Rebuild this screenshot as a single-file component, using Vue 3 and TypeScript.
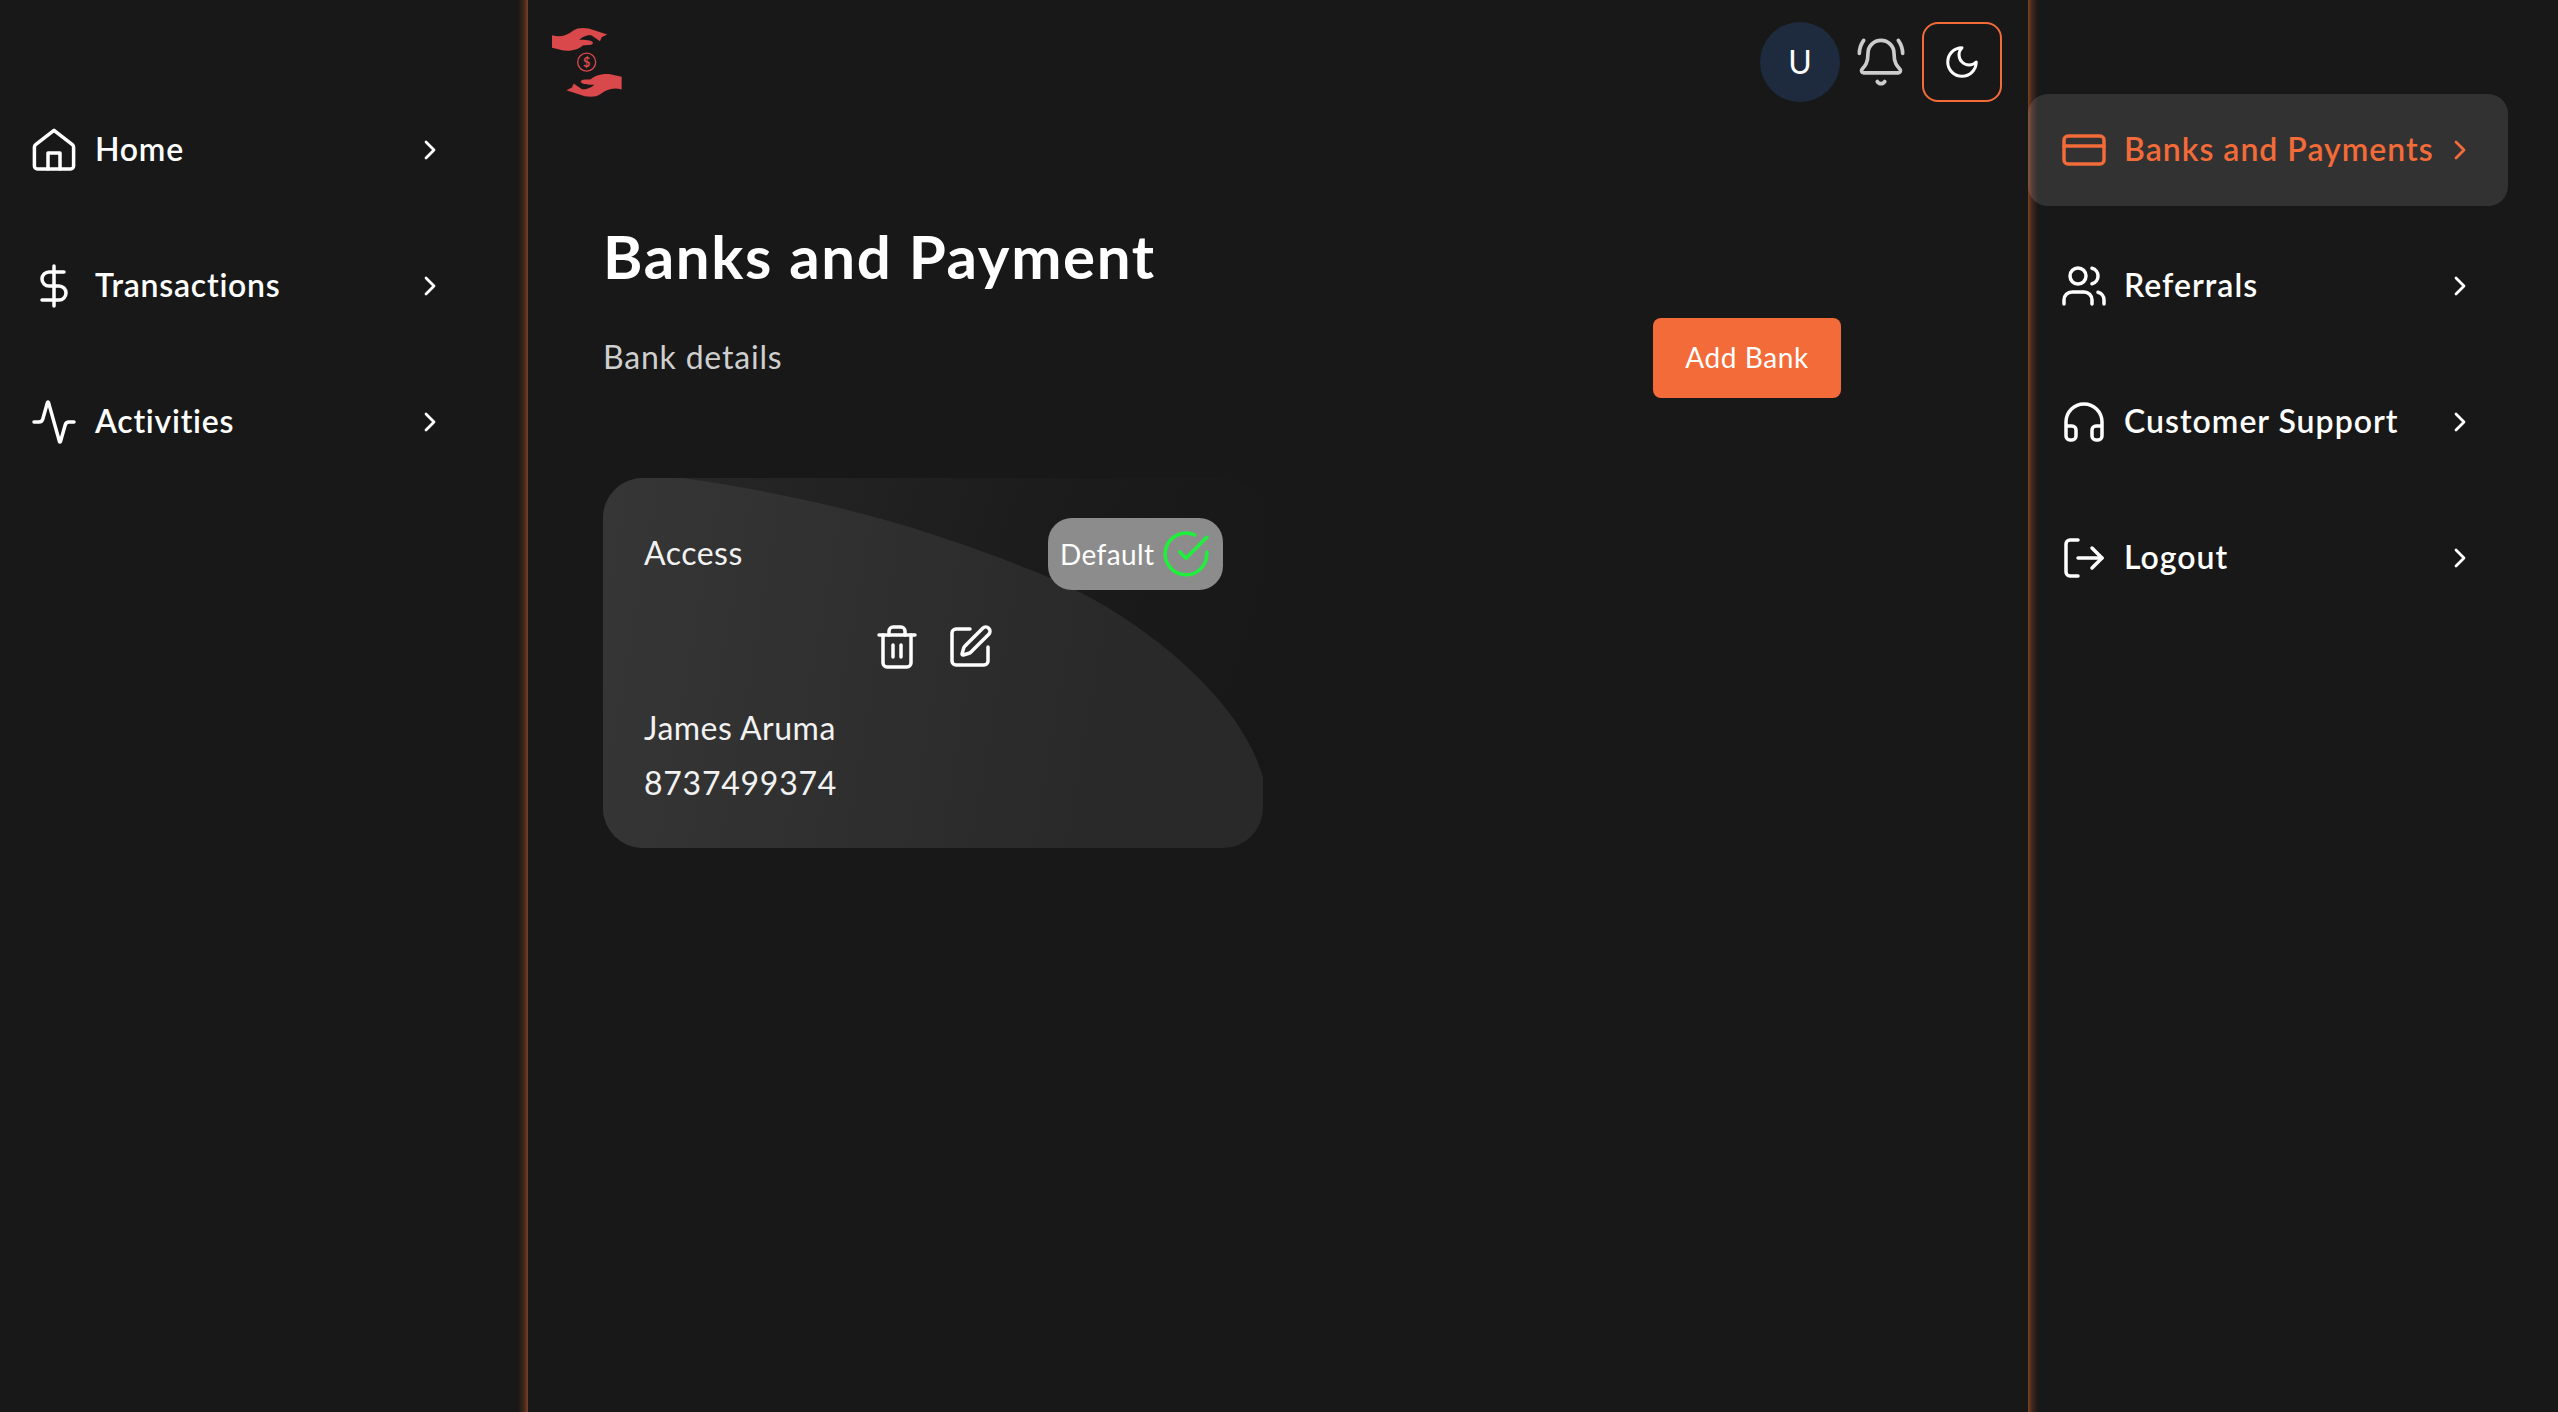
<script setup lang="ts">
type NavItem = {
  label: string;
  paths: string[];
  active?: boolean;
};

const leftNav: NavItem[] = [
  {
    label: "Home",
    paths: [
      "M12 2.2 21.2 9.3a1.5 1.5 0 0 1 .6 1.2V20a1.5 1.5 0 0 1-1.5 1.5H3.7A1.5 1.5 0 0 1 2.2 20v-9.5a1.5 1.5 0 0 1 .6-1.2Z",
      "M9 21.5V13.5h6v8",
    ],
  },
  {
    label: "Transactions",
    paths: ["M12 2v20", "M17 5H9.5a3.5 3.5 0 0 0 0 7h5a3.5 3.5 0 0 1 0 7H6"],
  },
  {
    label: "Activities",
    paths: [
      "M22 12h-2.48a2 2 0 0 0-1.93 1.46l-2.35 8.36a.25.25 0 0 1-.48 0L9.24 2.18a.25.25 0 0 0-.48 0l-2.35 8.36A2 2 0 0 1 4.49 12H2",
    ],
  },
];

const rightNav: NavItem[] = [
  {
    label: "Banks and Payments",
    active: true,
    paths: ["M4 5h16a2 2 0 0 1 2 2v10a2 2 0 0 1-2 2H4a2 2 0 0 1-2-2V7a2 2 0 0 1 2-2Z", "M2 10h20"],
  },
  {
    label: "Referrals",
    paths: [
      "M16 21v-2a4 4 0 0 0-4-4H6a4 4 0 0 0-4 4v2",
      "M13 7a4 4 0 1 1-8 0 4 4 0 0 1 8 0Z",
      "M22 21v-2a4 4 0 0 0-3-3.87",
      "M16 3.13a4 4 0 0 1 0 7.75",
    ],
  },
  {
    label: "Customer Support",
    paths: [
      "M3 14h3a2 2 0 0 1 2 2v3a2 2 0 0 1-2 2H5a2 2 0 0 1-2-2v-7a9 9 0 0 1 18 0v7a2 2 0 0 1-2 2h-1a2 2 0 0 1-2-2v-3a2 2 0 0 1 2-2h3",
    ],
  },
  {
    label: "Logout",
    paths: ["M9 21H5a2 2 0 0 1-2-2V5a2 2 0 0 1 2-2h4", "m16 17 5-5-5-5", "M21 12H9"],
  },
];

const handPath =
  "M96 104C120 112 140 105 160 90C175 80 200 80 225 90L262 102L245 110L240 122L215 105C200 102 185 112 178 118C195 118 215 118 219 127C218 135 205 134 190 134C175 148 150 152 130 150L96 142Z";
</script>

<template>
  <div class="page">
    <aside class="sidebar sidebar-left">
      <nav class="nav">
        <a v-for="item in leftNav" :key="item.label" class="nav-item">
          <svg class="nav-icon" viewBox="0 0 24 24">
            <path v-for="d in item.paths" :key="d" :d="d" />
          </svg>
          <span class="nav-label">{{ item.label }}</span>
          <svg class="chevron" viewBox="0 0 24 24"><path d="m9 18 6-6-6-6" /></svg>
        </a>
      </nav>
    </aside>

    <main class="main">
      <header class="topbar">
        <svg class="logo" viewBox="96 80 210 212">
          <path :d="handPath" />
          <path :d="handPath" transform="rotate(180 200.5 185.5)" />
          <circle class="coin" cx="200" cy="185" r="27" />
          <text class="coin-sign" x="200" y="198" text-anchor="middle">$</text>
        </svg>
        <div class="topbar-actions">
          <div class="avatar">U</div>
          <svg class="bell" viewBox="0 0 24 24">
            <path d="M10.268 21a2 2 0 0 0 3.464 0" />
            <path d="M22 8c0-2.3-.8-4.3-2-6" />
            <path d="M3.262 15.326A1 1 0 0 0 4 17h16a1 1 0 0 0 .74-1.673C19.41 13.956 18 12.499 18 8A6 6 0 0 0 6 8c0 4.499-1.411 5.956-2.738 7.326" />
            <path d="M4 2C2.8 3.7 2 5.7 2 8" />
          </svg>
          <button class="theme-button">
            <svg class="moon" viewBox="0 0 24 24"><path d="M12 3a6 6 0 0 0 9 9 9 9 0 1 1-9-9Z" /></svg>
          </button>
        </div>
      </header>

      <section class="content">
        <h1 class="title">Banks and Payment</h1>
        <div class="subhead">
          <p class="subtitle">Bank details</p>
          <button class="add-button">Add Bank</button>
        </div>

        <div class="bank-card">
          <div class="card-top">
            <span class="bank-name">Access</span>
            <span class="default-pill">
              Default
              <svg class="check" viewBox="0 0 24 24">
                <path d="M22 11.08V12a10 10 0 1 1-5.93-9.14" />
                <path d="M22 4 12 14.01l-3-3" />
              </svg>
            </span>
          </div>
          <div class="card-actions">
            <svg class="action-icon" viewBox="0 0 24 24">
              <path d="M3 6h18" />
              <path d="M19 6v14c0 1-1 2-2 2H7c-1 0-2-1-2-2V6" />
              <path d="M8 6V4c0-1 1-2 2-2h4c1 0 2 1 2 2v2" />
              <path d="M10 11v6" />
              <path d="M14 11v6" />
            </svg>
            <svg class="action-icon" viewBox="0 0 24 24">
              <path d="M12 3H5a2 2 0 0 0-2 2v14a2 2 0 0 0 2 2h14a2 2 0 0 0 2-2v-7" />
              <path d="M18.375 2.625a1 1 0 0 1 3 3l-9.013 9.014a2 2 0 0 1-.853.505l-2.873.84a.5.5 0 0 1-.62-.62l.84-2.873a2 2 0 0 1 .506-.852z" />
            </svg>
          </div>
          <p class="card-line">James Aruma</p>
          <p class="card-line digits">8737499374</p>
        </div>
      </section>
    </main>

    <aside class="sidebar sidebar-right">
      <nav class="nav">
        <a
          v-for="item in rightNav"
          :key="item.label"
          class="nav-item"
          :class="{ active: item.active }"
        >
          <svg class="nav-icon" viewBox="0 0 24 24">
            <path v-for="d in item.paths" :key="d" :d="d" />
          </svg>
          <span class="nav-label">{{ item.label }}</span>
          <svg class="chevron" viewBox="0 0 24 24"><path d="m9 18 6-6-6-6" /></svg>
        </a>
      </nav>
    </aside>
  </div>
</template>

<style>
html,
body {
  margin: 0;
  background: #181818;
}
</style>

<style scoped>
.page {
  display: grid;
  grid-template-columns: 528px 1500px 530px;
  height: 1412px;
  overflow: hidden;
  background: #181818;
  color: #fff;
  font-family: Lato, "Noto Sans", sans-serif;
}

.sidebar-left {
  background: linear-gradient(90deg, transparent, rgba(125, 63, 36, 0.4) 60%, #7d3f24) right top / 10px 100% no-repeat;
}

.sidebar-right {
  background: linear-gradient(90deg, #7d3f24, rgba(125, 63, 36, 0.4) 40%, transparent) left top / 10px 100% no-repeat;
}

.nav {
  display: flex;
  flex-direction: column;
  gap: 24px;
  padding-top: 94px;
}

.nav-item {
  display: flex;
  align-items: center;
  height: 112px;
  box-sizing: border-box;
  border-radius: 20px;
}

.sidebar-left .nav-item {
  width: 478px;
  padding: 0 32px 0 30px;
}

.sidebar-right .nav-item {
  width: 480px;
  padding: 0 32px;
}

.nav-item.active {
  background: rgba(255, 255, 255, 0.115);
  color: #f26b38;
}

.nav-icon {
  width: 48px;
  height: 48px;
  flex: none;
  fill: none;
  stroke: currentColor;
  stroke-width: 1.75;
  stroke-linecap: round;
  stroke-linejoin: round;
}

.nav-label {
  margin: 0 0 3px 17px;
  font-size: 32px;
  font-weight: 600;
  letter-spacing: 0.75px;
  white-space: nowrap;
}

.sidebar-right .nav-label {
  margin-left: 16px;
  letter-spacing: 1px;
}

.chevron {
  width: 32px;
  height: 32px;
  flex: none;
  margin-left: auto;
  fill: none;
  stroke: currentColor;
  stroke-width: 2.1;
  stroke-linecap: round;
  stroke-linejoin: round;
}

.topbar {
  display: flex;
  justify-content: space-between;
  padding: 22px 26px 0 24px;
}

.logo {
  width: 70px;
  height: 71px;
  margin-top: 5px;
  fill: #d9484a;
}

.coin {
  fill: none;
  stroke: #d9484a;
  stroke-width: 4;
}

.coin-sign {
  font-size: 38px;
  font-weight: 700;
}

.topbar-actions {
  display: flex;
  align-items: center;
  gap: 15px;
}

.avatar {
  display: flex;
  align-items: center;
  justify-content: center;
  width: 80px;
  height: 80px;
  padding-bottom: 2px;
  box-sizing: border-box;
  border-radius: 50%;
  background: #1e2b3e;
  font-size: 32px;
  font-weight: 400;
}

.bell {
  width: 52px;
  height: 52px;
  fill: none;
  stroke: #ccc;
  stroke-width: 1.7;
  stroke-linecap: round;
  stroke-linejoin: round;
}

.theme-button {
  display: flex;
  align-items: center;
  justify-content: center;
  width: 80px;
  height: 80px;
  padding: 0;
  border: 2px solid #f26b38;
  border-radius: 16px;
  background: transparent;
}

.moon {
  width: 38px;
  height: 38px;
  fill: none;
  stroke: #fff;
  stroke-width: 1.9;
  stroke-linecap: round;
  stroke-linejoin: round;
}

.content {
  padding: 120px 187px 0 75px;
}

.title {
  margin: -2px 0 0;
  font-size: 60px;
  line-height: 72px;
  font-weight: 700;
  letter-spacing: 1.65px;
}

.subhead {
  display: flex;
  align-items: center;
  justify-content: space-between;
  margin-top: 26px;
}

.subtitle {
  margin: 0 0 3px;
  font-size: 32px;
  letter-spacing: 0.8px;
  color: #cfcfcf;
}

.add-button {
  width: 188px;
  height: 80px;
  padding: 0 0 2px;
  border: none;
  border-radius: 8px;
  background: #f26b38;
  color: #fff;
  font-family: inherit;
  font-size: 28px;
  letter-spacing: 0.6px;
}

.bank-card {
  position: relative;
  isolation: isolate;
  box-sizing: border-box;
  width: 660px;
  height: 370px;
  margin-top: 80px;
  padding: 40px 40px 0 41px;
  border-radius: 40px;
  background: linear-gradient(110deg, #292929, #1b1b1b 60%, #171717);
  box-shadow: 0 0 50px rgba(255, 255, 255, 0.012);
}

/* lighter curved panel behind the card content */
.bank-card::before {
  content: "";
  position: absolute;
  inset: 0;
  z-index: -1;
  border-radius: inherit;
  background: linear-gradient(100deg, #363636, #292929 75%);
  clip-path: path("M80 0C230 22 330 52 445 99C545 142 640 225 660 300V370H0V0Z");
}

.card-top {
  display: flex;
  align-items: center;
  justify-content: space-between;
}

.bank-name {
  margin-bottom: 3px;
  font-size: 32px;
  letter-spacing: 0.5px;
  color: #f2f2f2;
}

.default-pill {
  display: flex;
  align-items: center;
  gap: 7px;
  box-sizing: border-box;
  width: 175px;
  height: 72px;
  padding-left: 12px;
  border-radius: 24px;
  background: #8c8c8c;
  font-size: 28px;
  letter-spacing: 0.4px;
  white-space: nowrap;
}

.check {
  width: 50px;
  height: 50px;
  flex: none;
  fill: none;
  stroke: #1ff03c;
  stroke-width: 1.7;
  stroke-linecap: round;
  stroke-linejoin: round;
}

.card-actions {
  display: flex;
  justify-content: center;
  gap: 25px;
  margin: 33px 0 29px;
}

.action-icon {
  width: 48px;
  height: 48px;
  fill: none;
  stroke: #fff;
  stroke-width: 1.75;
  stroke-linecap: round;
  stroke-linejoin: round;
}

.card-line {
  margin: 0;
  font-size: 32px;
  line-height: 55px;
  letter-spacing: 0.5px;
  color: #f2f2f2;
}

.digits {
  letter-spacing: 0.75px;
}
</style>
